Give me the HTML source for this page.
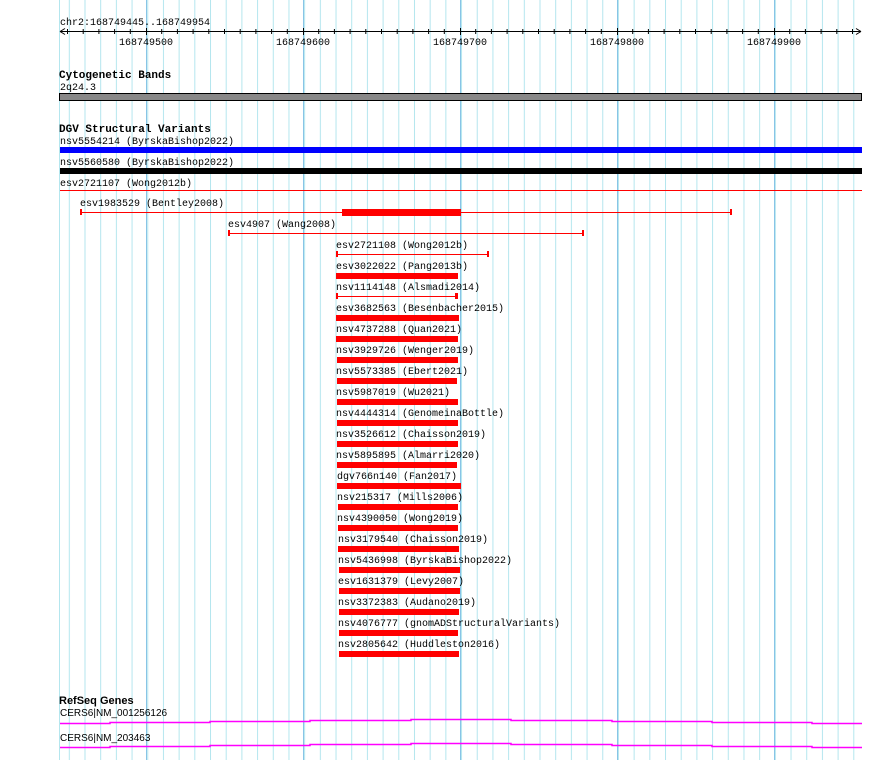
<!DOCTYPE html>
<html><head><meta charset="utf-8"><style>
html,body{margin:0;padding:0;background:#fff;width:890px;height:760px;overflow:hidden}
svg{display:block}
text{font-family:"Liberation Mono",monospace;font-size:10px;fill:#000}
.b{font-weight:bold;font-size:11px}
</style></head><body>
<svg width="890" height="760" xmlns="http://www.w3.org/2000/svg">
<defs>
<pattern id="g" x="68.8" y="0" width="15.69" height="760" patternUnits="userSpaceOnUse">
<rect x="0" y="0" width="1" height="760" fill="#b4e6ee"/>
</pattern>
</defs>
<rect x="60" y="0" width="802" height="760" fill="url(#g)"/>
<rect x="59" y="0" width="1" height="760" fill="#b4e6ee"/>
<g fill="#88c4e6">
<rect x="146" y="0" width="1" height="760"/><rect x="303" y="0" width="1" height="760"/><rect x="460" y="0" width="1" height="760"/><rect x="617" y="0" width="1" height="760"/><rect x="774" y="0" width="1" height="760"/>
</g>
<!-- ruler -->
<text x="60" y="25">chr2:168749445..168749954</text>
<line x1="60" y1="31.5" x2="861" y2="31.5" stroke="#000"/>
<path d="M60 31.5 L65 28.5 M60 31.5 L65 34.5 M861 31.5 L856 28.5 M861 31.5 L856 34.5" stroke="#000"/>
<g stroke="#000">
<path d="M67.5 29v5M83.2 29v5M98.9 29v5M114.6 29v5M130.3 29v5M146.5 28v7M161.7 29v5M177.4 29v5M193.1 29v5M208.8 29v5M224.5 29v5M240.2 29v5M255.9 29v5M271.6 29v5M287.3 29v5M303.5 28v7M318.7 29v5M334.4 29v5M350.1 29v5M365.8 29v5M381.5 29v5M397.2 29v5M412.9 29v5M428.6 29v5M444.3 29v5M460.5 28v7M475.7 29v5M491.4 29v5M507.1 29v5M522.8 29v5M538.5 29v5M554.2 29v5M569.9 29v5M585.6 29v5M601.3 29v5M617.5 28v7M632.7 29v5M648.4 29v5M664.1 29v5M679.8 29v5M695.5 29v5M711.2 29v5M726.9 29v5M742.6 29v5M758.3 29v5M774.5 28v7M789.7 29v5M805.4 29v5M821.1 29v5M836.8 29v5M852.5 29v5"/>
</g>
<text x="146" y="45" text-anchor="middle">168749500</text>
<text x="303" y="45" text-anchor="middle">168749600</text>
<text x="460" y="45" text-anchor="middle">168749700</text>
<text x="617" y="45" text-anchor="middle">168749800</text>
<text x="774" y="45" text-anchor="middle">168749900</text>
<!-- cyto -->
<text class="b" x="59" y="78">Cytogenetic Bands</text>
<text x="60" y="90">2q24.3</text>
<rect x="59.5" y="93.5" width="802" height="7" fill="#888" stroke="#000"/>
<!-- DGV -->
<text class="b" x="59" y="132">DGV Structural Variants</text>
<text x="60" y="144">nsv5554214 (ByrskaBishop2022)</text>
<rect x="60" y="147" width="802" height="6" fill="#0000ff"/>
<text x="60" y="165">nsv5560580 (ByrskaBishop2022)</text>
<rect x="60" y="168" width="802" height="6" fill="#000"/>
<text x="60" y="186">esv2721107 (Wong2012b)</text>
<rect x="60" y="190" width="802" height="1" fill="#f00"/>
<g fill="#f00">
<text x="80" y="206">esv1983529 (Bentley2008)</text>
<rect x="81" y="212" width="651" height="1"/><rect x="80" y="209" width="2" height="6"/><rect x="730" y="209" width="2" height="6"/>
<rect x="342" y="209" width="119" height="7"/>
<text x="228" y="227">esv4907 (Wang2008)</text>
<rect x="229" y="233" width="355" height="1"/><rect x="228" y="230" width="2" height="6"/><rect x="582" y="230" width="2" height="6"/>
<text x="336" y="248">esv2721108 (Wong2012b)</text>
<rect x="337" y="254" width="151" height="1"/><rect x="336" y="251" width="2" height="6"/><rect x="487" y="251" width="2" height="6"/>
<text x="336" y="269">esv3022022 (Pang2013b)</text>
<rect x="336" y="273" width="122" height="6"/>
<text x="336" y="290">nsv1114148 (Alsmadi2014)</text>
<rect x="337" y="296" width="120" height="1"/><rect x="336" y="293" width="2" height="6"/><rect x="455" y="293" width="3" height="6"/>
<text x="336" y="311">esv3682563 (Besenbacher2015)</text>
<rect x="336" y="315" width="123" height="6"/>
<text x="336" y="332">nsv4737288 (Quan2021)</text>
<rect x="336" y="336" width="122" height="6"/>
<text x="336" y="353">nsv3929726 (Wenger2019)</text>
<rect x="337" y="357" width="121" height="6"/>
<text x="336" y="374">nsv5573385 (Ebert2021)</text>
<rect x="337" y="378" width="120" height="6"/>
<text x="336" y="395">nsv5987019 (Wu2021)</text>
<rect x="337" y="399" width="121" height="6"/>
<text x="336" y="416">nsv4444314 (GenomeinaBottle)</text>
<rect x="337" y="420" width="121" height="6"/>
<text x="336" y="437">nsv3526612 (Chaisson2019)</text>
<rect x="337" y="441" width="121" height="6"/>
<text x="336" y="458">nsv5895895 (Almarri2020)</text>
<rect x="337" y="462" width="120" height="6"/>
<text x="337" y="479">dgv766n140 (Fan2017)</text>
<rect x="337" y="483" width="124" height="6"/>
<text x="337" y="500">nsv215317 (Mills2006)</text>
<rect x="338" y="504" width="120" height="6"/>
<text x="337" y="521">nsv4390050 (Wong2019)</text>
<rect x="338" y="525" width="120" height="6"/>
<text x="338" y="542">nsv3179540 (Chaisson2019)</text>
<rect x="338" y="546" width="121" height="6"/>
<text x="338" y="563">nsv5436998 (ByrskaBishop2022)</text>
<rect x="339" y="567" width="121" height="6"/>
<text x="338" y="584">esv1631379 (Levy2007)</text>
<rect x="339" y="588" width="121" height="6"/>
<text x="338" y="605">nsv3372383 (Audano2019)</text>
<rect x="339" y="609" width="120" height="6"/>
<text x="338" y="626">nsv4076777 (gnomADStructuralVariants)</text>
<rect x="339" y="630" width="119" height="6"/>
<text x="338" y="647">nsv2805642 (Huddleston2016)</text>
<rect x="339" y="651" width="120" height="6"/>
</g>
<!-- RefSeq -->
<text class="b" x="59" y="704" style="font-family:'Liberation Sans',sans-serif;font-size:11px">RefSeq Genes</text>
<text x="60" y="716" style="font-family:'Liberation Sans',sans-serif;font-size:10px">CERS6|NM_001256126</text>
<text x="60" y="741" style="font-family:'Liberation Sans',sans-serif;font-size:10px">CERS6|NM_203463</text>
<g stroke="#ff00ff" stroke-width="1.5" fill="none">
<path d="M60 723.5H110V722.5H210V721.5H310V720.5H411V719.5H511V720.5H612V721.5H712V722.5H812V723.5H862"/>
<path d="M60 747.5H110V746.5H210V745.5H310V744.5H411V743.5H511V744.5H612V745.5H712V746.5H812V747.5H862"/>
</g>
</svg>
</body></html>
